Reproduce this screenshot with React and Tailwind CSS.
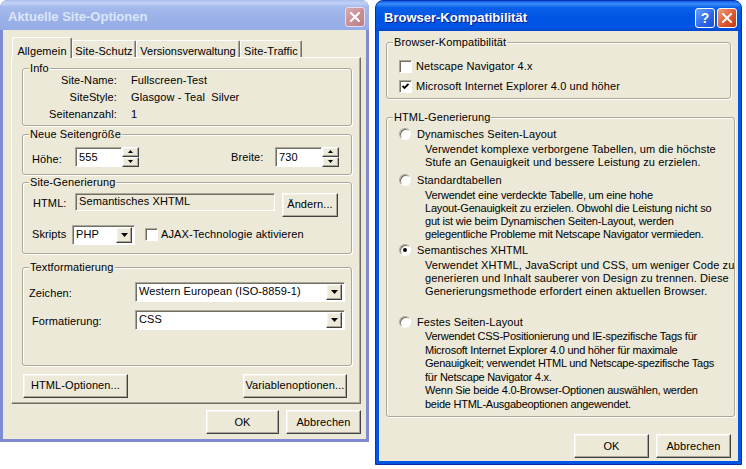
import React from "react";

const raised =
  "bg-[#ece9d8] border border-t-white border-l-white border-r-[#404040] border-b-[#404040] shadow-[inset_-1px_-1px_0_#aca899,inset_1px_1px_0_#f5f4ea]";
const sunken =
  "border border-t-[#aca899] border-l-[#aca899] border-r-white border-b-white shadow-[inset_1px_1px_0_#716f64]";

function Button({ children, className = "" }) {
  return (
    <button type="button" className={`${raised} flex items-center justify-center h-[24px] text-[11px] ${className}`}>
      {children}
    </button>
  );
}

function Arrow({ up }) {
  return (
    <svg width="7" height="4" viewBox="0 0 7 4">
      <path d={up ? "M3.5 0L7 4H0z" : "M0 0h7L3.5 4z"} fill="#000" />
    </svg>
  );
}

function SmallArrow({ up }) {
  return (
    <svg width="5" height="3" viewBox="0 0 5 3">
      <path d={up ? "M2.5 0L5 3H0z" : "M0 0h5L2.5 3z"} fill="#000" />
    </svg>
  );
}

function Spinner() {
  return (
    <div className="flex flex-col w-[17px] h-[20px]">
      <div className={`${raised} flex-1 flex items-center justify-center`}>
        <SmallArrow up />
      </div>
      <div className={`${raised} flex-1 flex items-center justify-center`}>
        <SmallArrow />
      </div>
    </div>
  );
}

function NumberField({ value }) {
  return (
    <div className="flex items-center">
      <div className={`${sunken} bg-white w-[47px] h-[20px] flex items-center pl-[3px]`}>{value}</div>
      <Spinner />
    </div>
  );
}

function Select({ value, className = "" }) {
  return (
    <div className={`${sunken} bg-white h-[20px] flex items-center pl-[3px] pr-[2px] ${className}`}>
      <span className="flex-1">{value}</span>
      <div className={`${raised} w-[16px] h-[16px] flex items-center justify-center`}>
        <Arrow />
      </div>
    </div>
  );
}

function Check({ checked }) {
  return (
    <div className={`${sunken} bg-white w-[13px] h-[13px] flex items-center justify-center shrink-0`}>
      {checked && (
        <svg width="7" height="7" viewBox="0 0 7 7">
          <path d="M0.5 3L2.5 5L6.5 1" stroke="#000" strokeWidth="1.8" fill="none" />
        </svg>
      )}
    </div>
  );
}

function Radio({ checked }) {
  return (
    <div className="w-[12px] h-[12px] rounded-full bg-white border border-t-[#aca899] border-l-[#aca899] border-r-white border-b-white shadow-[inset_1px_1px_0_#716f64] flex items-center justify-center shrink-0">
      {checked && <div className="w-[4px] h-[4px] rounded-full bg-black" />}
    </div>
  );
}

function Group({ title, className = "", children }) {
  return (
    <fieldset className={`border border-[#aca899] rounded-[3px] shadow-[inset_1px_1px_0_#fff,1px_1px_0_#fff] ${className}`}>
      <legend className="ml-[6px] px-[1px] leading-[13px] bg-[#ece9d8]">{title}</legend>
      {children}
    </fieldset>
  );
}

function CloseX() {
  return (
    <svg width="10" height="10" viewBox="0 0 10 10">
      <path d="M1 1L9 9M9 1L1 9" stroke="#fff" strokeWidth="2" strokeLinecap="square" />
    </svg>
  );
}

function TitleBar({ title, active, help }) {
  return (
    <div
      className={`h-[30px] shrink-0 flex items-center pl-[8px] pr-[4px] pt-[4px] ${
        active
          ? "bg-[linear-gradient(180deg,#0a5ff0_0%,#3b8cf8_10%,#0a60ea_22%,#0054e3_55%,#0056e8_85%,#0048cc_100%)]"
          : "bg-[linear-gradient(180deg,#a9bdef_0%,#c2d1f5_10%,#a4b9ec_24%,#9bb2e8_60%,#95ace5_100%)]"
      }`}
    >
      <span
        className={`flex-1 text-[13px] tracking-normal font-bold ${
          active ? "text-white [text-shadow:1px_1px_0_#0a1a8a]" : "text-[#dbe5f8]"
        }`}
      >
        {title}
      </span>
      {help && (
        <div className="w-[20px] h-[20px] mr-[2px] rounded-[3px] border border-white bg-[linear-gradient(135deg,#6aa3fb,#2a66e6_60%,#1a50d0)] flex items-center justify-center text-white font-bold text-[14px] leading-none">
          ?
        </div>
      )}
      <div
        className={`w-[20px] h-[20px] rounded-[3px] border flex items-center justify-center ${
          active
            ? "border-white bg-[linear-gradient(135deg,#f0a080,#e0582f_55%,#c23a14)]"
            : "border-[#e6dcee] bg-[linear-gradient(135deg,#d8aab0,#c98e93_55%,#b97c84)]"
        }`}
      >
        <CloseX />
      </div>
    </div>
  );
}

function Tab({ label, selected, className = "" }) {
  return (
    <div
      className={`border border-b-0 border-t-white border-l-white border-r-[#716f64] rounded-t-[2px] shadow-[inset_-1px_0_0_#aca899] bg-[#ece9d8] flex justify-center whitespace-nowrap ${
        selected ? "h-[21px] -mb-[1px] relative z-10 pt-[5px]" : "h-[17px] pt-[2px]"
      } ${className}`}
    >
      {label}
    </div>
  );
}

function LeftDialog() {
  return (
    <div className="w-[369px] h-[442px] flex flex-col rounded-t-[8px] overflow-hidden bg-[#7f8bd3]">
      <TitleBar title="Aktuelle Site-Optionen" />
      <div className="flex-1 mx-[3px] mb-[3px] bg-[#ece9d8] flex flex-col pt-[7px]">
        <div className="flex items-end h-[20px] ml-[9px]">
          <Tab label="Allgemein" selected className="w-[60px]" />
          <Tab label="Site-Schutz" className="w-[64px]" />
          <Tab label="Versionsverwaltung" className="w-[104px] tracking-normal" />
          <Tab label="Site-Traffic" className="w-[62px]" />
        </div>
        <div className="ml-[8px] w-[350px] h-[347px] border border-t-white border-l-white border-r-[#716f64] border-b-[#716f64] shadow-[inset_-1px_-1px_0_#aca899] flex flex-col pl-[10px] pr-[8px] pt-[4px]">
          <Group title="Info" className="pb-[2px]">
            <div className="grid grid-cols-[94px_1fr] gap-x-[14px] leading-[17px] -mt-[3px]">
              <span className="text-right">Site-Name:</span>
              <span>Fullscreen-Test</span>
              <span className="text-right">SiteStyle:</span>
              <span>Glasgow - Teal&nbsp;&nbsp;Silver</span>
              <span className="text-right">Seitenanzahl:</span>
              <span>1</span>
            </div>
          </Group>
          <Group title="Neue Seitengröße" className="mt-[2px] pb-[6px]">
            <div className="flex items-center mt-[5px] pl-[9px] pr-[12px]">
              <span className="w-[43px] mt-[5px]">Höhe:</span>
              <NumberField value="555" />
              <span className="ml-auto w-[44px] mt-[1px]">Breite:</span>
              <NumberField value="730" />
            </div>
          </Group>
          <Group title="Site-Generierung" className="mt-[1px] pb-[8px]">
            <div className="flex items-start mt-[4px] pl-[10px]">
              <span className="w-[42px] mt-[2px]">HTML:</span>
              <div className={`${sunken} bg-[#ece9d8] w-[200px] h-[18px] flex items-center pl-[3px]`}>Semantisches XHTML</div>
              <Button className="w-[56px] h-[23px] ml-[7px]">Ändern...</Button>
            </div>
            <div className="flex items-center mt-[8px] pl-[9px]">
              <span className="w-[40px]">Skripts</span>
              <Select value="PHP" className="w-[63px]" />
              <div className="ml-[10px]">
                <Check />
              </div>
              <span className="ml-[3px]">AJAX-Technologie aktivieren</span>
            </div>
          </Group>
          <Group title="Textformatierung" className="mt-[7px] pb-[35px]">
            <div className="flex items-center mt-[8px] pl-[6px]">
              <span className="w-[106px] mt-[3px]">Zeichen:</span>
              <Select value="Western European (ISO-8859-1)" className="w-[210px]" />
            </div>
            <div className="flex items-center mt-[8px] pl-[9px]">
              <span className="w-[103px] mt-[3px]">Formatierung:</span>
              <Select value="CSS" className="w-[210px]" />
            </div>
          </Group>
          <div className="flex justify-between mt-[8px] pl-[1px] pr-[5px]">
            <Button className="w-[105px]">HTML-Optionen...</Button>
            <Button className="w-[104px]">Variablenoptionen...</Button>
          </div>
        </div>
        <div className="flex justify-end gap-[7px] mt-[6px] pr-[5px]">
          <Button className="w-[73px]">OK</Button>
          <Button className="w-[75px]">Abbrechen</Button>
        </div>
      </div>
    </div>
  );
}

function Option({ label, checked, lines, className = "", descClass = "", lead = "leading-[13px]" }) {
  return (
    <div className={className}>
      <div className="flex items-center h-[14px] pl-[12px]">
        <Radio checked={checked} />
        <span className="ml-[6px]">{label}</span>
      </div>
      <div className={`pl-[38px] ${lead} ${descClass}`}>
        {lines.map((l, i) => (
          <div key={i} className="whitespace-nowrap">
            {l}
          </div>
        ))}
      </div>
    </div>
  );
}

function RightDialog() {
  return (
    <div className="w-[367px] h-[465px] flex flex-col rounded-t-[8px] overflow-hidden bg-[#0055e5] border border-[#0a2fb0]">
      <TitleBar title="Browser-Kompatibilität" active help />
      <div className="flex-1 mx-[3px] mb-[3px] bg-[#ece9d8] flex flex-col pt-[5px] px-[7px]">
        <Group title="Browser-Kompatibilität" className="pb-[2px]">
          <div className="mt-[7px] pl-[12px]">
            <div className="flex items-center h-[20px]">
              <Check />
              <span className="ml-[4px]">Netscape Navigator 4.x</span>
            </div>
            <div className="flex items-center h-[20px]">
              <Check checked />
              <span className="ml-[4px]">Microsoft Internet Explorer 4.0 und höher</span>
            </div>
          </div>
        </Group>
        <Group title="HTML-Generierung" className="mt-[12px] pb-[5px]">
          <Option
            className="mt-[3px]"
            descClass="mt-[2px]"
            label="Dynamisches Seiten-Layout"
            lines={[
              "Verwendet komplexe verborgene Tabellen, um die höchste",
              "Stufe an Genauigkeit und bessere Leistung zu erzielen.",
            ]}
          />
          <Option
            className="mt-[4px]"
            descClass="mt-[2px] tracking-[-0.2px]"
            label="Standardtabellen"
            lines={[
              "Verwendet eine verdeckte Tabelle, um eine hohe",
              "Layout-Genauigkeit zu erzielen. Obwohl die Leistung nicht so",
              "gut ist wie beim Dynamischen Seiten-Layout, werden",
              "gelegentliche Probleme mit Netscape Navigator vermieden.",
            ]}
          />
          <Option
            className="mt-[2px]"
            descClass="mt-[2px]"
            checked
            label="Semantisches XHTML"
            lines={[
              "Verwendet XHTML, JavaScript und CSS, um weniger Code zu",
              "generieren und Inhalt sauberer von Design zu trennen. Diese",
              "Generierungsmethode erfordert einen aktuellen Browser.",
            ]}
          />
          <Option
            className="mt-[17px]"
            descClass="mt-[1px] tracking-[-0.25px]"
            lead="leading-[13.5px]"
            label="Festes Seiten-Layout"
            lines={[
              "Verwendet CSS-Positionierung und IE-spezifische Tags für",
              "Microsoft Internet Explorer 4.0 und höher für maximale",
              "Genauigkeit; verwendet HTML und Netscape-spezifische Tags",
              "für Netscape Navigator 4.x.",
              "Wenn Sie beide 4.0-Browser-Optionen auswählen, werden",
              "beide HTML-Ausgabeoptionen angewendet.",
            ]}
          />
        </Group>
        <div className="flex justify-end gap-[7px] mt-[17px]">
          <Button className="w-[75px]">OK</Button>
          <Button className="w-[75px]">Abbrechen</Button>
        </div>
      </div>
    </div>
  );
}

export default function App() {
  return (
    <div className="w-[746px] h-[469px] bg-white flex items-start gap-[6px] text-[11px] tracking-[0.1px] text-black font-['Liberation_Sans',Arial,sans-serif] overflow-hidden">
      <LeftDialog />
      <RightDialog />
    </div>
  );
}
